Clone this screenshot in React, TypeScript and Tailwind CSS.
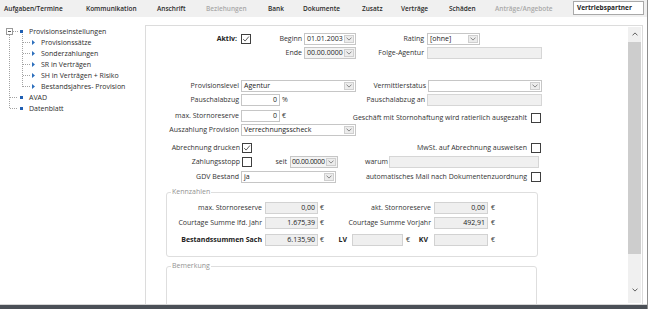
import React from 'react';

const Chevron = () => (
  <svg width="6" height="4" viewBox="0 0 6 4">
    <polyline points="0.5,0.6 3,3.1 5.5,0.6" fill="none" stroke="#7d7d7d" strokeWidth="0.9" />
  </svg>
);

const Check = () => (
  <svg width="8" height="8" viewBox="0 0 8 8">
    <polyline points="1.2,4.1 3.1,6.1 6.9,1.5" fill="none" stroke="#4d4d4d" strokeWidth="0.9" />
  </svg>
);

function CheckBox({ checked }: { checked?: boolean }) {
  return (
    <span className="flex h-[10px] w-[10px] shrink-0 items-center justify-center border border-[#3f3f3f] bg-white">
      {checked && <Check />}
    </span>
  );
}

function Select({ value, className, tight }: { value?: string; className: string; tight?: boolean }) {
  return (
    <div className={`flex h-[12px] shrink-0 items-stretch border border-[#c6c6c6] bg-white ${className}`}>
      <span
        className={`flex-1 overflow-hidden whitespace-nowrap leading-[10px] text-[#222] ${tight ? 'pl-[1px] tracking-[-0.3px]' : 'pl-[2px]'}`}
      >
        {value}
      </span>
      <span className="my-[1px] mr-[1px] flex w-[10px] shrink-0 items-center justify-center border border-[#cfcfcf] bg-[#ececec]">
        <Chevron />
      </span>
    </div>
  );
}

function TextBox({ value, className, right }: { value?: string; className: string; right?: boolean }) {
  return (
    <div
      className={`h-[12px] shrink-0 border leading-[10px] text-[#222] ${right ? 'pr-[2px] text-right' : 'pl-[2px]'} ${className}`}
    >
      {value}
    </div>
  );
}

const tabs = [
  { label: 'Aufgaben/Termine', w: 'w-[82px]' },
  { label: 'Kommunikation', w: 'w-[71px]' },
  { label: 'Anschrift', w: 'w-[49px]' },
  { label: 'Beziehungen', w: 'w-[62px]', disabled: true },
  { label: 'Bank', w: 'w-[35px]' },
  { label: 'Dokumente', w: 'w-[59px]' },
  { label: 'Zusatz', w: 'w-[39px]' },
  { label: 'Verträge', w: 'w-[48px]' },
  { label: 'Schäden', w: 'w-[46px]' },
  { label: 'Anträge/Angebote', w: 'w-[78px]', disabled: true },
];

const treeRows = [
  { label: 'Provisionseinstellungen', child: false },
  { label: 'Provisionssätze', child: true },
  { label: 'Sonderzahlungen', child: true },
  { label: 'SR in Verträgen', child: true },
  { label: 'SH in Verträgen + Risiko', child: true },
  { label: 'Bestandsjahres- Provision', child: true },
  { label: 'AVAD', child: false },
  { label: 'Datenblatt', child: false },
];

function TreeLines() {
  const ys = [14.5, 25.5, 36.5, 47.5, 58.5, 69.5, 80.5, 91.5];
  const dot = { stroke: '#a3a3a3', strokeWidth: 1, strokeDasharray: '1 1' };
  return (
    <svg className="pointer-events-none absolute left-0 top-0" width="40" height="100" viewBox="0 0 40 100">
      <line x1="9.5" y1="18" x2="9.5" y2="92" {...dot} />
      <line x1="13" y1="14.5" x2="19" y2="14.5" {...dot} />
      <line x1="22.5" y1="17" x2="22.5" y2="70" {...dot} />
      {ys.slice(1, 6).map(y => (
        <g key={y}>
          <line x1="23" y1={y} x2="30" y2={y} {...dot} />
          <polygon points={`32,${y - 2.5} 35,${y} 32,${y + 2.5}`} fill="#2c6fbd" />
        </g>
      ))}
      {ys.slice(6).map(y => (
        <g key={y}>
          <line x1="10" y1={y} x2="18" y2={y} {...dot} />
          <rect x="20" y={y - 1.5} width="3" height="3" fill="#1f5fb3" />
        </g>
      ))}
      <rect x="6.5" y="11.5" width="6" height="6" fill="#fff" stroke="#9a9a9a" strokeWidth="1" />
      <line x1="8" y1="14.5" x2="11" y2="14.5" stroke="#555" strokeWidth="1" />
      <rect x="20" y="13" width="3" height="3" fill="#1f5fb3" />
    </svg>
  );
}

export default function App() {
  return (
    <div className="flex h-[309px] w-[648px] flex-col overflow-hidden border-r border-[#8e8e8e] bg-white font-['Open_Sans','Noto_Sans',sans-serif] text-[7px] text-[#333]">
      {/* tab strip */}
      <div className="flex h-[17px] shrink-0 items-center bg-[#f0f0f0] pl-[4px]">
        {tabs.map(t => (
          <span
            key={t.label}
            className={`${t.w} shrink-0 whitespace-nowrap text-[6.5px] font-semibold ${t.disabled ? 'text-[#a9a9a9]' : 'text-[#2b2b2b]'}`}
          >
            {t.label}
          </span>
        ))}
        <span className="mt-[-1px] flex h-[14px] w-[71px] shrink-0 items-center border border-[#a9a9a9] bg-white pl-[3px] text-[6.5px] font-bold text-[#1e1e1e]">
          Vertriebspartner
        </span>
      </div>

      {/* body */}
      <div className="flex h-[288px] shrink-0 border-b border-[#d6d6d6]">
        {/* tree */}
        <div className="relative w-[145px] shrink-0 pt-[8.5px]">
          <TreeLines />
          {treeRows.map(r => (
            <div
              key={r.label}
              className={`h-[11.14px] whitespace-nowrap leading-[11px] text-[#2e2e2e] ${r.child ? 'pl-[41px]' : 'pl-[29px]'}`}
            >
              {r.label}
            </div>
          ))}
        </div>

        {/* panel */}
        <div className="flex flex-1 flex-col pr-[4px] pt-[8px]">
          <div className="flex flex-1 overflow-hidden border-l border-r border-t border-[#dcdcdc]">
            <div className="w-[482px] shrink-0 overflow-hidden leading-[12px]">
              {/* Aktiv / Beginn / Rating */}
              <div className="mt-[7px] flex h-[12px] items-center whitespace-nowrap">
                <span className="w-[95px] shrink-0 pr-[4px] text-right font-bold text-[#222]">Aktiv:</span>
                <CheckBox checked />
                <span className="w-[53px] shrink-0 pr-[2px] text-right">Beginn</span>
                <Select value="01.01.2003" className="w-[52px]" />
                <span className="w-[71px] shrink-0 pr-[3px] text-right">Rating</span>
                <Select value="[ohne]" className="w-[53px]" />
              </div>
              {/* Ende / Folge-Agentur */}
              <div className="mt-[2px] flex h-[12px] items-center whitespace-nowrap">
                <span className="w-[105px] shrink-0" />
                <span className="w-[53px] shrink-0 pr-[2px] text-right">Ende</span>
                <Select value="00.00.0000" className="w-[52px] !bg-[#f4f4f4]" />
                <span className="w-[71px] shrink-0 pr-[3px] text-right">Folge-Agentur</span>
                <TextBox className="w-[115px] border-[#d6d6d6] bg-[#f0f0f0]" />
              </div>

              {/* Provisionslevel / Vermittlerstatus */}
              <div className="mt-[21px] flex h-[12px] items-center whitespace-nowrap">
                <span className="w-[95px] shrink-0 pr-[2px] text-right">Provisionslevel</span>
                <Select value="Agentur" className="w-[115px]" />
                <span className="w-[72px] shrink-0 pr-[2px] text-right">Vermittlerstatus</span>
                <Select className="w-[114px]" />
              </div>
              {/* Pauschalabzug */}
              <div className="mt-[2px] flex h-[12px] items-center whitespace-nowrap">
                <span className="w-[95px] shrink-0 pr-[2px] text-right">Pauschalabzug</span>
                <TextBox value="0" right className="w-[39px] border-[#c6c6c6] bg-white" />
                <span className="w-[76px] shrink-0 pl-[2px]">%</span>
                <span className="w-[71px] shrink-0 pr-[2px] text-right">Pauschalabzug an</span>
                <TextBox className="w-[115px] border-[#d6d6d6] bg-[#f0f0f0]" />
              </div>
              {/* max. Stornoreserve */}
              <div className="mt-[4px] flex h-[12px] items-center whitespace-nowrap">
                <span className="w-[95px] shrink-0 pr-[2px] text-right">max. Stornoreserve</span>
                <TextBox value="0" right className="w-[39px] border-[#c6c6c6] bg-white" />
                <span className="w-[76px] shrink-0 pl-[2px]">€</span>
                <span className="relative top-[2px] flex w-[185px] shrink-0 items-center justify-end gap-[4px]">
                  <span>Geschäft mit Stornohaftung wird ratierlich ausgezahlt</span>
                  <CheckBox />
                </span>
              </div>
              {/* Auszahlung Provision */}
              <div className="mt-[2px] flex h-[12px] items-center whitespace-nowrap">
                <span className="w-[95px] shrink-0 pr-[2px] text-right">Auszahlung Provision</span>
                <Select value="Verrechnungsscheck" className="w-[115px]" />
              </div>
              {/* Abrechnung drucken / MwSt */}
              <div className="mt-[6px] flex h-[12px] items-center whitespace-nowrap">
                <span className="w-[96px] shrink-0 pr-[2px] text-right">Abrechnung drucken</span>
                <CheckBox checked />
                <span className="w-[104px] shrink-0" />
                <span className="flex w-[185px] shrink-0 items-center justify-end gap-[4px]">
                  <span>MwSt. auf Abrechnung ausweisen</span>
                  <CheckBox />
                </span>
              </div>
              {/* Zahlungsstopp / seit / warum */}
              <div className="mt-[2px] flex h-[12px] items-center whitespace-nowrap">
                <span className="w-[96px] shrink-0 pr-[2px] text-right">Zahlungsstopp</span>
                <CheckBox />
                <span className="w-[38px] shrink-0 pr-[3px] text-right">seit</span>
                <Select value="00.00.0000" tight className="w-[48px] !bg-[#f4f4f4]" />
                <span className="w-[51px] shrink-0 pl-[27px]">warum</span>
                <TextBox className="w-[150px] border-[#d6d6d6] bg-[#f0f0f0]" />
              </div>
              {/* GDV Bestand / automatisches Mail */}
              <div className="mt-[3px] flex h-[12px] items-center whitespace-nowrap">
                <span className="w-[95px] shrink-0 pr-[2px] text-right">GDV Bestand</span>
                <Select value="ja" className="w-[95px]" />
                <span className="w-[20px] shrink-0" />
                <span className="flex w-[185px] shrink-0 items-center justify-end gap-[4px]">
                  <span>automatisches Mail nach Dokumentenzuordnung</span>
                  <CheckBox />
                </span>
              </div>

              {/* Kennzahlen */}
              <fieldset className="ml-[20px] mt-[4px] w-[372px] rounded-[3px] border border-[#dedede] pb-[10px]">
                <legend className="ml-[4px] px-[1px] leading-[10px] text-[#939393]">Kennzahlen</legend>
                <div className="mt-[5px] flex h-[12px] items-center whitespace-nowrap">
                  <span className="w-[98px] shrink-0 pr-[3px] text-right">max. Stornoreserve</span>
                  <TextBox value="0,00" right className="w-[53px] border-[#d2d2d2] bg-[#efefef]" />
                  <span className="w-[6px] shrink-0 pl-[2px]">€</span>
                  <span className="w-[110px] shrink-0 pr-[3px] text-right">akt. Stornoreserve</span>
                  <TextBox value="0,00" right className="w-[54px] border-[#d2d2d2] bg-[#efefef]" />
                  <span className="shrink-0 pl-[3px]">€</span>
                </div>
                <div className="mt-[3px] flex h-[12px] items-center whitespace-nowrap">
                  <span className="w-[98px] shrink-0 pr-[3px] text-right">Courtage Summe lfd. Jahr</span>
                  <TextBox value="1.675,39" right className="w-[53px] border-[#d2d2d2] bg-[#efefef]" />
                  <span className="w-[6px] shrink-0 pl-[2px]">€</span>
                  <span className="w-[110px] shrink-0 pr-[3px] text-right">Courtage Summe Vorjahr</span>
                  <TextBox value="492,91" right className="w-[54px] border-[#d2d2d2] bg-[#efefef]" />
                  <span className="shrink-0 pl-[3px]">€</span>
                </div>
                <div className="mt-[5px] flex h-[12px] items-center whitespace-nowrap">
                  <span className="w-[98px] shrink-0 pr-[3px] text-right font-bold text-[#222]">Bestandssummen Sach</span>
                  <TextBox value="6.135,90" right className="w-[53px] border-[#d2d2d2] bg-[#efefef]" />
                  <span className="w-[6px] shrink-0 pl-[2px]">€</span>
                  <span className="w-[28px] shrink-0 pr-[5px] text-right font-bold text-[#222]">LV</span>
                  <TextBox className="w-[51px] border-[#d2d2d2] bg-[#efefef]" />
                  <span className="flex w-[31px] shrink-0 justify-between pl-[3px] pr-[6px]">
                    <span>€</span>
                    <span className="font-bold text-[#222]">KV</span>
                  </span>
                  <TextBox className="w-[54px] border-[#d2d2d2] bg-[#efefef]" />
                  <span className="shrink-0 pl-[3px]">€</span>
                </div>
              </fieldset>

              {/* Bemerkung */}
              <fieldset className="ml-[20px] mt-[4px] h-[80px] w-[371px] rounded-[3px] border border-[#dedede]">
                <legend className="ml-[4px] px-[1px] leading-[10px] text-[#939393]">Bemerkung</legend>
              </fieldset>
            </div>

            {/* scrollbar */}
            <div className="my-[1px] flex w-[13px] shrink-0 flex-col bg-[#f0f0f0]">
              <div className="flex h-[14px] items-center justify-center">
                <svg width="6" height="4" viewBox="0 0 6 4">
                  <polyline points="0.5,3.4 3,0.9 5.5,3.4" fill="none" stroke="#606060" strokeWidth="1" />
                </svg>
              </div>
              <div className="mt-[1px] h-[212px] bg-[#cdcdcd]" />
              <div className="flex-1" />
              <div className="mb-[6px] flex h-[14px] items-center justify-center">
                <svg width="6" height="4" viewBox="0 0 6 4">
                  <polyline points="0.5,0.6 3,3.1 5.5,0.6" fill="none" stroke="#606060" strokeWidth="1" />
                </svg>
              </div>
            </div>
            <div className="w-[1px] shrink-0" />
          </div>
        </div>
      </div>

      {/* bottom edge */}
      <div className="h-[4px] shrink-0 bg-[#4b5057]" />
    </div>
  );
}
